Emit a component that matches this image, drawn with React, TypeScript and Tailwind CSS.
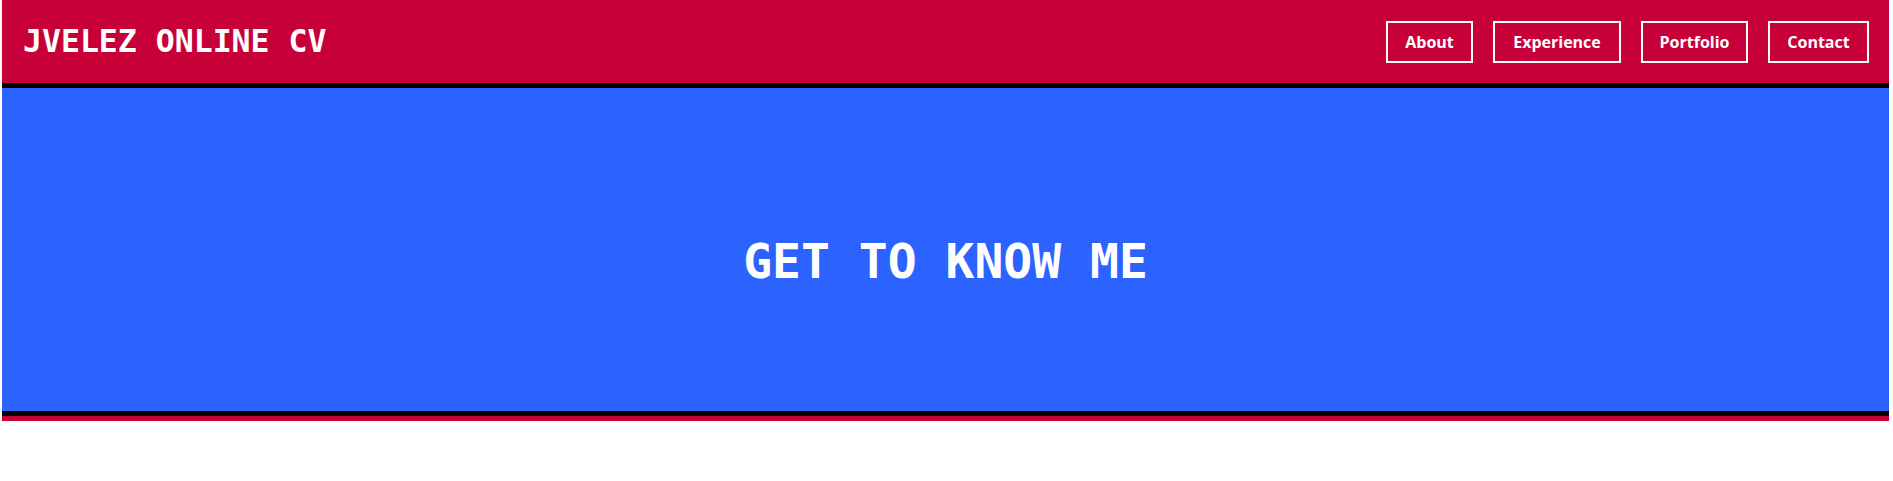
import React from "react";

const navItems = [
  { label: "About", w: "w-[87px]" },
  { label: "Experience", w: "w-[128px]" },
  { label: "Portfolio", w: "w-[107px]" },
  { label: "Contact", w: "w-[101px]" },
];

export default function App() {
  return (
    <div className="min-h-[481px] bg-white">
      <div className="ml-[2px] mr-[4px]">
        <header className="flex h-[88px] items-center justify-between border-b-[5px] border-black bg-[#c8003a] pl-[21px] pr-[20px]">
          <h1 className="font-['DejaVu_Sans_Mono',monospace] text-[31.5px] font-bold leading-none text-white">
            JVELEZ ONLINE CV
          </h1>
          <nav className="flex items-center gap-[20px]">
            {navItems.map((n) => (
              <a
                key={n.label}
                href="#"
                className={`flex h-[42px] ${n.w} items-center justify-center border-2 border-white font-['Open_Sans',sans-serif] text-[16px] font-bold text-white`}
              >
                {n.label}
              </a>
            ))}
          </nav>
        </header>
        <section className="flex h-[328px] items-center justify-center border-b-[5px] border-black bg-[#2c63ff] pt-[22px]">
          <h2 className="font-['DejaVu_Sans_Mono',monospace] text-[48px] font-bold leading-none text-white">
            GET TO KNOW ME
          </h2>
        </section>
        <div className="h-[5px] bg-[#c8003a]" />
      </div>
    </div>
  );
}
